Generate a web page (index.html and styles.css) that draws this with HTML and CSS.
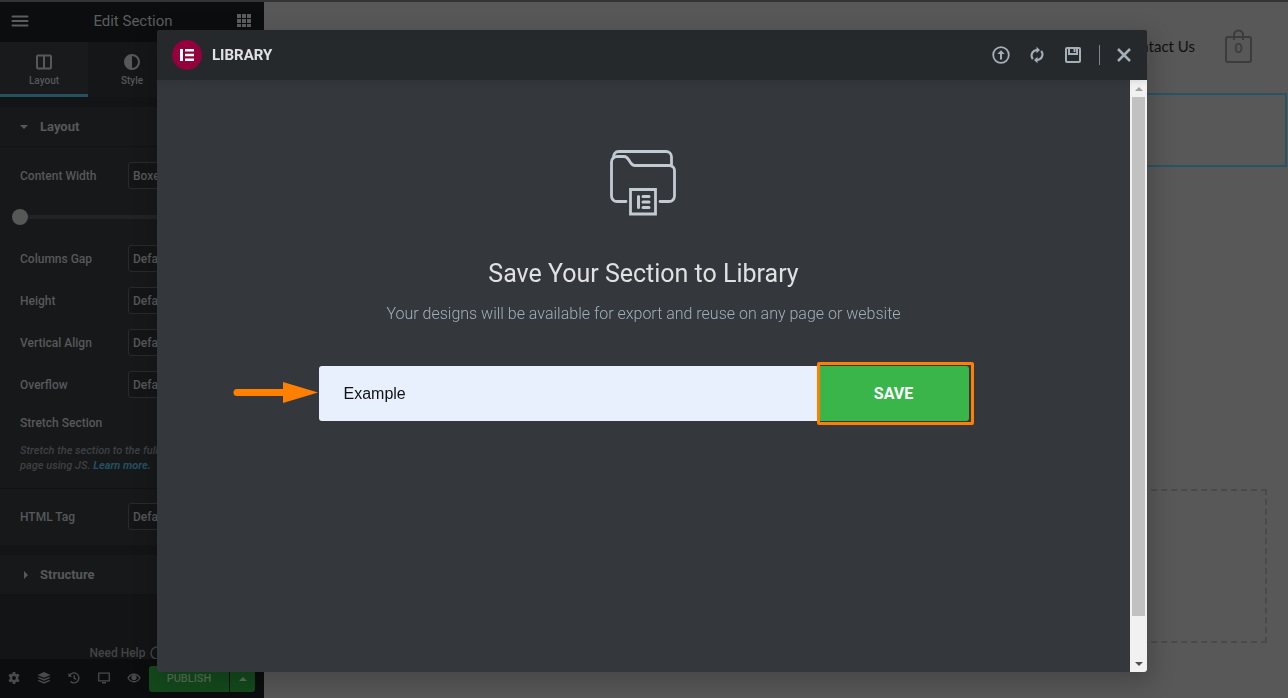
FILE: index.html
```html
<!DOCTYPE html>
<html lang="en">
<head>
    <meta charset="UTF-8">
    <meta name="viewport" content="width=device-width, initial-scale=1.0">
    <title>Edit Section</title>
    <link rel="stylesheet" href="styles.css">
</head>
<body>
    <div class="editor">
        <!-- Left panel -->
        <aside class="panel">
            <header class="panel-header">
                <button class="icon-btn" aria-label="Menu">
                    <svg width="18" height="14" viewBox="0 0 18 14"><path d="M1.500 2.500h15M1.500 7h15M1.500 11.500h15" stroke="currentColor" stroke-width="2" stroke-linecap="round"/></svg>
                </button>
                <h1 class="panel-title">Edit Section</h1>
                <button class="icon-btn" aria-label="Widgets">
                    <svg width="14" height="14" viewBox="0 0 14 14" fill="currentColor"><path d="M0 0h4v4H0zM5 0h4v4H5zM10 0h4v4h-4zM0 5h4v4H0zM5 5h4v4H5zM10 5h4v4h-4zM0 10h4v3H0zM5 10h4v3H5zM10 10h4v3h-4z"/></svg>
                </button>
            </header>
            <nav class="tabs">
                <button class="tab active">
                    <svg width="16" height="16" viewBox="0 0 16 16" fill="none" stroke="currentColor" stroke-width="2"><rect x="1" y="1.500" width="14" height="13" rx="1"/><path d="M8 2v12"/></svg>
                    Layout
                </button>
                <button class="tab">
                    <svg width="16" height="16" viewBox="0 0 16 16"><circle cx="8" cy="8" r="7" fill="none" stroke="currentColor" stroke-width="2"/><path d="M8 1a7 7 0 0 0 0 14z" fill="currentColor"/></svg>
                    Style
                </button>
                <button class="tab">
                    <svg width="16" height="16" viewBox="0 0 16 16"><circle cx="8" cy="8" r="5" fill="none" stroke="currentColor" stroke-width="3"/></svg>
                    Advanced
                </button>
            </nav>

            <div class="panel-body">
                <h2 class="section-heading"><span class="caret-down"></span>Layout</h2>
                <div class="controls">
                    <div class="control">
                        <label for="contentWidth">Content Width</label>
                        <select id="contentWidth"><option>Boxed</option><option>Full Width</option></select>
                    </div>
                    <input class="slider" type="range" min="0" max="100" value="0" aria-label="Width">
                    <div class="control">
                        <label for="columnsGap">Columns Gap</label>
                        <select id="columnsGap"><option>Default</option></select>
                    </div>
                    <div class="control">
                        <label for="height">Height</label>
                        <select id="height"><option>Default</option></select>
                    </div>
                    <div class="control">
                        <label for="verticalAlign">Vertical Align</label>
                        <select id="verticalAlign"><option>Default</option></select>
                    </div>
                    <div class="control">
                        <label for="overflow">Overflow</label>
                        <select id="overflow"><option>Default</option></select>
                    </div>
                    <div class="stretch-label">Stretch Section</div>
                    <p class="description">Stretch the section to the full width of the page using JS. <a href="#">Learn more.</a></p>
                </div>
                <div class="controls divided">
                    <div class="control">
                        <label for="htmlTag">HTML Tag</label>
                        <select id="htmlTag"><option>Default</option></select>
                    </div>
                </div>
                <h2 class="section-heading structure"><span class="caret-right"></span>Structure</h2>
                <div class="help">Need Help
                    <svg width="14" height="14" viewBox="0 0 14 14"><circle cx="7" cy="7" r="6" fill="none" stroke="currentColor" stroke-width="1.500"/></svg>
                </div>
            </div>

            <footer class="panel-footer">
                <button class="icon-btn" aria-label="Settings">
                    <svg width="12" height="12" viewBox="0 0 12 12"><path fill="currentColor" fill-rule="evenodd" d="M4.800 0h2.400l.4 1.700 1 .6 1.700-.6 1.200 2.100-1.300 1.200v2l1.300 1.200-1.200 2.100-1.700-.6-1 .6-.4 1.700H4.800l-.4-1.700-1-.6-1.700.6L.5 8.200 1.800 7V5L.5 3.800l1.200-2.100 1.700.6 1-.6zM6 4.100a1.900 1.900 0 1 0 0 3.800 1.900 1.900 0 0 0 0-3.800z"/></svg>
                </button>
                <button class="icon-btn" aria-label="Navigator">
                    <svg width="14" height="12" viewBox="0 0 14 12" fill="currentColor"><path d="M7 0l6.500 2.900L7 5.800.5 2.900zM2 4.900l5 2.200 5-2.200 1.500.8L7 8.700.5 5.700zM2 7.900l5 2.200 5-2.200 1.500.8L7 11.700.5 8.700z"/></svg>
                </button>
                <button class="icon-btn" aria-label="History">
                    <svg width="12" height="12" viewBox="0 0 12 12" fill="none" stroke="currentColor" stroke-width="1.400"><path d="M1.500 3.500A5 5 0 1 1 2.500 9.600M6.200 3.200v3l2 1.200"/><path d="M.4 1v3.700h3.700z" fill="currentColor" stroke="none"/></svg>
                </button>
                <button class="icon-btn" aria-label="Responsive Mode">
                    <svg width="14" height="12" viewBox="0 0 14 12"><path d="M1.700 1.200h10.600v7.600H1.700z" fill="none" stroke="currentColor" stroke-width="1.300"/><path d="M5 10h4v1.500H5z" fill="currentColor"/></svg>
                </button>
                <button class="icon-btn" aria-label="Preview Changes">
                    <svg width="14" height="10" viewBox="0 0 14 10"><path d="M1 5c3-5 9-5 12 0-3 5-9 5-12 0z" fill="none" stroke="currentColor" stroke-width="1.300"/><circle cx="7" cy="4.600" r="2.600" fill="currentColor"/></svg>
                </button>
                <div class="publish">
                    <button class="publish-btn">PUBLISH</button>
                    <button class="publish-more" aria-label="Save options"><span class="caret-up"></span></button>
                </div>
            </footer>
        </aside>

        <!-- Page preview -->
        <main class="preview">
            <header class="site-header">
                <a class="site-link" href="#">Contact Us</a>
                <a class="cart" href="#">
                    <svg width="27" height="34" viewBox="0 0 27 34" fill="none" stroke="currentColor" stroke-width="2"><rect x="1" y="8" width="25" height="25" rx="2"/><path d="M9 11V6a4.500 4.500 0 0 1 9 0v5"/></svg>
                    <span class="cart-count">0</span>
                </a>
            </header>
            <div class="selected-section"></div>
            <div class="drop-area"></div>
        </main>
    </div>

    <!-- Library modal -->
    <div class="overlay">
        <div class="modal" role="dialog" aria-labelledby="modalTitle">
            <header class="modal-header">
                <svg class="logo" width="30" height="30" viewBox="0 0 30 30"><circle cx="15" cy="15" r="15" fill="#93003c"/><path d="M8 9h3v12H8zM13 9h9v2.500h-9zM13 13.800h9v2.400h-9zM13 18.500h9V21h-9z" fill="#fff"/></svg>
                <h2 class="modal-title" id="modalTitle">LIBRARY</h2>
                <div class="modal-actions">
                    <button class="icon-btn" aria-label="Import Template">
                        <svg width="18" height="18" viewBox="0 0 18 18" fill="none" stroke="currentColor"><circle cx="9" cy="9" r="7.800" stroke-width="1.800"/><path d="M9 13.500V6" stroke-width="2"/><path d="M5.300 8L9 4.200 12.700 8z" fill="currentColor" stroke="none"/></svg>
                    </button>
                    <button class="icon-btn" aria-label="Sync Library">
                        <svg width="18" height="18" viewBox="0 0 18 18" fill="none" stroke="currentColor" stroke-width="2"><path d="M4.800 13.200C2 9.500 4 4.200 9.500 4M13.200 4.800C16 8.500 14 13.800 8.500 14"/><path d="M8.500.8v6.400L12 4zM9.500 10.800v6.400L6 14z" fill="currentColor" stroke="none"/></svg>
                    </button>
                    <button class="icon-btn" aria-label="Save">
                        <svg width="18" height="18" viewBox="0 0 18 18" fill="none" stroke="currentColor" stroke-width="2"><rect x="2" y="2" width="14" height="14" rx="1"/><path d="M5 2v6h8V2"/><path d="M10.500 3v3"/></svg>
                    </button>
                    <span class="separator"></span>
                    <button class="icon-btn" aria-label="Close">
                        <svg width="18" height="18" viewBox="0 0 18 18"><path d="M3 3l12 12M15 3L3 15" stroke="currentColor" stroke-width="2.500"/></svg>
                    </button>
                </div>
            </header>
            <div class="modal-body">
                <div class="modal-content">
                    <svg class="folder" width="67" height="66" viewBox="0 0 67 66" fill="none" stroke="#c2cbd2" stroke-width="2.800" stroke-linecap="round">
                        <path d="M16 51.500H7a5.500 5.500 0 0 1-5.500-5.500V12A5.500 5.500 0 0 1 7 6.500h7c6 0 5 9 11 9h34.500a5 5 0 0 1 5 5V46a5.500 5.500 0 0 1-5.500 5.500h-9"/>
                        <path d="M3.500 8C3.500 4 5 1.500 9 1.500h47a5.500 5.500 0 0 1 5.500 5.500v9"/>
                        <path d="M20.500 39.500h25v24.500h-25z"/>
                        <path d="M28.500 46.500v11M33 46.500h6M33 52h6M33 57.500h6" stroke-width="3"/>
                    </svg>
                    <h3 class="save-title">Save Your Section to Library</h3>
                    <p class="save-text">Your designs will be available for export and reuse on any page or website</p>
                    <form class="save-form">
                        <svg class="arrow" width="86" height="22" viewBox="0 0 86 22"><path d="M4 10.500h50" stroke="#ff8000" stroke-width="7" stroke-linecap="round"/><path d="M50 0v21l35-10.500z" fill="#ff8000"/></svg>
                        <input class="save-input" type="text" value="Example" aria-label="Template name">
                        <div class="save-wrap">
                            <button class="save-btn" type="button">SAVE</button>
                            <span class="highlight"></span>
                        </div>
                    </form>
                </div>
                <div class="scrollbar">
                    <span class="scroll-up"></span>
                    <span class="scroll-thumb"></span>
                    <span class="scroll-down"></span>
                </div>
            </div>
        </div>
    </div>
</body>
</html>
```
FILE: styles.css
```css
* {
    box-sizing: border-box;
}
body {
    margin: 0;
    font-family: Roboto, Arial, sans-serif;
    background-color: #585858;
    color: #56585a;
    overflow: hidden;
}
h1, h2, h3, p {
    margin: 0;
}
button, input, select {
    font-family: inherit;
    color: inherit;
    margin: 0;
}
button {
    border: 0;
    padding: 0;
    background: none;
    cursor: pointer;
}
svg {
    display: block;
}
.editor {
    display: flex;
    height: 100vh;
    border-top: 2px solid #343437;
}

/* Panel */
.panel {
    display: flex;
    flex-direction: column;
    flex: none;
    width: 264px;
    background-color: #131416;
}
.panel-header {
    display: flex;
    align-items: center;
    justify-content: space-between;
    height: 40px;
    padding: 0 13px 2px 11px;
    background-color: #0c0d0e;
    color: #5c5d5e;
}
.panel-title {
    font-size: 15px;
    font-weight: 400;
}
.tabs {
    display: grid;
    grid-template-columns: repeat(3, 1fr);
    height: 55px;
}
.tab {
    display: flex;
    flex-direction: column;
    align-items: center;
    gap: 5px;
    padding-top: 12px;
    font-size: 10px;
    font-weight: 500;
    line-height: 12px;
    background-color: #151618;
    border-bottom: 3px solid #151618;
}
.tab.active {
    background-color: #191a1c;
    border-bottom-color: #24505f;
}
.panel-body {
    flex: 1;
    min-height: 0;
    overflow: hidden;
    padding-top: 10px;
}
.section-heading {
    display: flex;
    align-items: center;
    gap: 12px;
    height: 40px;
    padding-left: 20px;
    font-size: 13px;
    font-weight: 700;
    background-color: #17181a;
    border-bottom: 1px solid #111214;
}
.section-heading.structure {
    margin-top: 10px;
}
.caret-down, .caret-right, .caret-up {
    border: 4px solid transparent;
}
.caret-down {
    border-top-color: currentColor;
    border-bottom: 0;
}
.caret-right {
    border-left-color: currentColor;
    border-right: 0;
    margin-left: 4px;
}
.caret-up {
    display: inline-block;
    border-bottom-color: currentColor;
    border-top: 0;
}
.controls {
    padding: 15px 20px;
    background-color: #17181a;
    font-size: 12px;
    font-weight: 500;
}
.controls.divided {
    padding-top: 14px;
    border-top: 1px solid #111214;
}
.control {
    display: flex;
    align-items: center;
    justify-content: space-between;
    height: 27px;
}
.control + .control {
    margin-top: 15px;
}
.control select {
    width: 116px;
    height: 27px;
    padding: 0 4px;
    font-size: 12px;
    font-weight: 500;
    appearance: none;
    background-color: #141517;
    border: 1px solid #292a2d;
    border-radius: 3px;
}
.slider {
    display: block;
    appearance: none;
    width: calc(100% + 8px);
    height: 16px;
    margin: 20px 0 20px -8px;
    background: linear-gradient(#222326, #222326) 8px center / 100% 4px no-repeat;
}
.slider::-webkit-slider-thumb {
    appearance: none;
    width: 16px;
    height: 16px;
    border-radius: 50%;
    background-color: #565757;
}
.stretch-label {
    margin-top: 16px;
    line-height: 18px;
}
.description {
    margin-top: 11px;
    width: 210px;
    font-size: 11px;
    font-weight: 500;
    font-style: italic;
    line-height: 15px;
    color: #3e4144;
}
.description a {
    color: #24505f;
    font-weight: 700;
    text-decoration: none;
}
.help {
    display: flex;
    align-items: center;
    justify-content: center;
    gap: 5px;
    margin-top: 51px;
    padding-right: 10px;
    font-size: 12px;
    font-weight: 500;
    line-height: 14px;
    color: #424446;
}
.panel-footer {
    display: flex;
    align-items: center;
    height: 39px;
    background-color: #0c0d0e;
    color: #484b4e;
}
.panel-footer .icon-btn {
    display: flex;
    justify-content: center;
    width: 30px;
    padding: 0 2px 2px 0;
}
.publish {
    display: flex;
    gap: 1px;
    height: 26px;
    margin-left: -1px;
    color: #567058;
}
.publish-btn {
    width: 80px;
    font-size: 11px;
    font-weight: 500;
    background-color: #144a1c;
    border-radius: 3px 0 0 3px;
}
.publish-more {
    display: flex;
    align-items: center;
    justify-content: center;
    width: 25px;
    background-color: #144a1c;
    border-radius: 0 3px 3px 0;
}

/* Preview */
.preview {
    flex: 1;
    min-width: 0;
    padding-right: 1px;
}
.site-header {
    display: flex;
    align-items: center;
    justify-content: flex-end;
    gap: 30px;
    height: 91px;
    padding: 0 35px 3px 0;
    font-family: Lato, sans-serif;
}
.site-link {
    font-size: 15px;
    color: #111;
    text-decoration: none;
}
.cart {
    position: relative;
    color: #3c3c3c;
}
.cart-count {
    position: absolute;
    left: 0;
    right: 0;
    top: 11px;
    font-size: 14px;
    line-height: 16px;
    font-weight: 700;
    text-align: center;
}
.selected-section {
    height: 74px;
    border: 2px solid #285461;
}
.drop-area {
    height: 154px;
    margin: 322px 20px 0;
    border: 2px dashed #4a4a4a;
}

/* Modal */
.overlay {
    position: fixed;
    inset: 0;
    display: flex;
    justify-content: center;
    padding: 30px 0 26px 16px;
}
.modal {
    display: flex;
    flex-direction: column;
    width: 100%;
    max-width: 990px;
    overflow: hidden;
    background-color: #34373c;
    border-radius: 3px;
    box-shadow: 2px 8px 23px 3px rgba(0, 0, 0, 0.2);
}
.modal-header {
    display: flex;
    align-items: center;
    position: relative;
    height: 50px;
    padding: 0 14px 0 15px;
    background-color: #26292c;
    box-shadow: 0 0 8px rgba(0, 0, 0, 0.15);
}
.modal-title {
    margin-left: 10px;
    font-size: 15px;
    font-weight: 700;
    color: #e0e1e3;
}
.modal-actions {
    display: flex;
    align-items: center;
    gap: 18px;
    margin-left: auto;
    color: #a4afb7;
}
.separator {
    width: 1px;
    height: 20px;
    margin: 0 -3px 0 -1px;
    background-color: #7d868c;
}
.modal-body {
    display: flex;
    flex: 1;
    min-height: 0;
}
.modal-content {
    display: flex;
    flex-direction: column;
    align-items: center;
    flex: 1;
    padding: 70px 20px 0;
}
.save-title {
    margin-top: 43px;
    font-size: 25px;
    font-weight: 400;
    line-height: 30px;
    color: #e0e1e3;
}
.save-text {
    margin-top: 13px;
    font-size: 16px;
    font-weight: 300;
    line-height: 24px;
    color: #a0b0b9;
}
.save-form {
    display: flex;
    position: relative;
    width: 100%;
    max-width: 650px;
    height: 55px;
    margin-top: 40px;
}
.arrow {
    position: absolute;
    left: -86px;
    top: 16px;
}
.save-input {
    flex: 1;
    min-width: 0;
    padding: 0 25px;
    border: 0;
    border-radius: 3px 0 0 3px;
    background-color: #e8f0fe;
    font-family: "Liberation Sans", Arial, sans-serif;
    font-size: 16px;
    color: #111;
}
.save-wrap {
    position: relative;
    display: flex;
    width: 150px;
}
.save-btn {
    flex: 1;
    font-size: 16px;
    font-weight: 700;
    color: #fff;
    background-color: #39b54a;
    border-radius: 0 3px 3px 0;
}
.highlight {
    position: absolute;
    inset: -4px -5px -4px -2px;
    border: 3px solid #ff8000;
    border-radius: 2px;
    pointer-events: none;
}
.scrollbar {
    display: flex;
    flex-direction: column;
    width: 17px;
    background-color: #f1f1f1;
}
.scroll-up, .scroll-down {
    display: flex;
    align-items: center;
    justify-content: center;
    height: 17px;
}
.scroll-up::before, .scroll-down::before {
    content: "";
    border: 4px solid transparent;
}
.scroll-up::before {
    border-bottom-color: #a3a3a3;
    border-top: 0;
}
.scroll-down::before {
    border-top-color: #505050;
    border-bottom: 0;
}
.scroll-thumb {
    flex: 1;
    margin: 0 2px 39px;
    background-color: #c1c1c1;
}
```
